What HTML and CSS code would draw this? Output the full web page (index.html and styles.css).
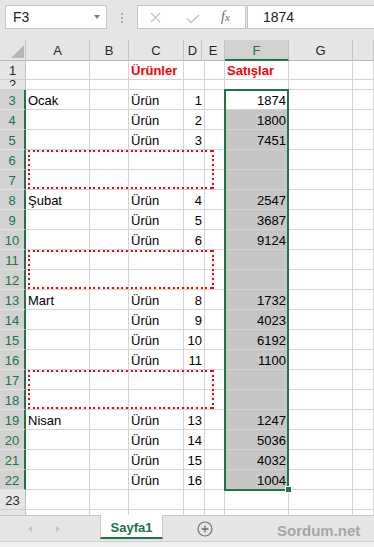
FILE: index.html
```html
<!DOCTYPE html>
<html lang="tr">
<head>
<meta charset="utf-8">
<title>Sayfa1</title>
<link rel="stylesheet" href="styles.css">
</head>
<body>
<div class="app">
  <div class="formula-bar">
    <div class="name-box"><span>F3</span><span class="caret"></span></div>
    <div class="grip"><i></i><i></i><i></i></div>
    <div class="fx-buttons">
      <svg class="ic-x" width="11" height="11" viewBox="0 0 11 11"><path d="M1 1 L10 10 M10 1 L1 10" stroke="#c4c4c4" stroke-width="1.3" fill="none"/></svg>
      <svg class="ic-ok" width="14" height="10" viewBox="0 0 14 10"><path d="M1 4.5 L5 8.5 L13 1" stroke="#c4c4c4" stroke-width="1.6" fill="none"/></svg>
      <span class="fx"><i>f</i><i class="sub">x</i></span>
    </div>
    <div class="formula-input">1874</div>
  </div>

  <div class="sheet">
    <div class="colhead">
      <div class="ch corner"><span class="tri"></span></div>
      <div class="ch">A</div>
      <div class="ch">B</div>
      <div class="ch">C</div>
      <div class="ch">D</div>
      <div class="ch">E</div>
      <div class="ch on">F</div>
      <div class="ch">G</div>
      <div class="ch"></div>
    </div>
    <table class="grid">
      <colgroup>
        <col class="c-rh"><col class="c-a"><col class="c-b"><col class="c-c"><col class="c-d"><col class="c-e"><col class="c-f"><col class="c-g"><col class="c-h">
      </colgroup>
      <tbody>
        <tr><th>1</th><td></td><td></td><td class="hd">Ürünler</td><td></td><td></td><td class="hd">Satışlar</td><td></td><td></td></tr>
        <tr class="r2"><th><span>2</span></th><td></td><td></td><td></td><td></td><td></td><td></td><td></td><td></td></tr>
        <tr><th class="sel">3</th><td>Ocak</td><td></td><td>Ürün</td><td class="n">1</td><td></td><td class="n">1874</td><td></td><td></td></tr>
        <tr><th class="sel">4</th><td></td><td></td><td>Ürün</td><td class="n">2</td><td></td><td class="n s">1800</td><td></td><td></td></tr>
        <tr><th class="sel">5</th><td></td><td></td><td>Ürün</td><td class="n">3</td><td></td><td class="n s">7451</td><td></td><td></td></tr>
        <tr><th class="sel">6</th><td></td><td></td><td></td><td></td><td></td><td class="s"></td><td></td><td></td></tr>
        <tr><th class="sel">7</th><td></td><td></td><td></td><td></td><td></td><td class="s"></td><td></td><td></td></tr>
        <tr><th class="sel">8</th><td>Şubat</td><td></td><td>Ürün</td><td class="n">4</td><td></td><td class="n s">2547</td><td></td><td></td></tr>
        <tr><th class="sel">9</th><td></td><td></td><td>Ürün</td><td class="n">5</td><td></td><td class="n s">3687</td><td></td><td></td></tr>
        <tr><th class="sel">10</th><td></td><td></td><td>Ürün</td><td class="n">6</td><td></td><td class="n s">9124</td><td></td><td></td></tr>
        <tr><th class="sel">11</th><td></td><td></td><td></td><td></td><td></td><td class="s"></td><td></td><td></td></tr>
        <tr><th class="sel">12</th><td></td><td></td><td></td><td></td><td></td><td class="s"></td><td></td><td></td></tr>
        <tr><th class="sel">13</th><td>Mart</td><td></td><td>Ürün</td><td class="n">8</td><td></td><td class="n s">1732</td><td></td><td></td></tr>
        <tr><th class="sel">14</th><td></td><td></td><td>Ürün</td><td class="n">9</td><td></td><td class="n s">4023</td><td></td><td></td></tr>
        <tr><th class="sel">15</th><td></td><td></td><td>Ürün</td><td class="n">10</td><td></td><td class="n s">6192</td><td></td><td></td></tr>
        <tr><th class="sel">16</th><td></td><td></td><td>Ürün</td><td class="n">11</td><td></td><td class="n s">1100</td><td></td><td></td></tr>
        <tr><th class="sel">17</th><td></td><td></td><td></td><td></td><td></td><td class="s"></td><td></td><td></td></tr>
        <tr><th class="sel">18</th><td></td><td></td><td></td><td></td><td></td><td class="s"></td><td></td><td></td></tr>
        <tr><th class="sel">19</th><td>Nisan</td><td></td><td>Ürün</td><td class="n">13</td><td></td><td class="n s">1247</td><td></td><td></td></tr>
        <tr><th class="sel">20</th><td></td><td></td><td>Ürün</td><td class="n">14</td><td></td><td class="n s">5036</td><td></td><td></td></tr>
        <tr><th class="sel">21</th><td></td><td></td><td>Ürün</td><td class="n">15</td><td></td><td class="n s">4032</td><td></td><td></td></tr>
        <tr><th class="sel">22</th><td></td><td></td><td>Ürün</td><td class="n">16</td><td></td><td class="n s">1004</td><td></td><td></td></tr>
        <tr><th>23</th><td></td><td></td><td></td><td></td><td></td><td></td><td></td><td></td></tr>
        <tr><th></th><td></td><td></td><td></td><td></td><td></td><td></td><td></td><td></td></tr>
      </tbody>
    </table>
    <div class="sel-outline"></div>
    <div class="fill-handle"></div>
    <div class="mark m1"></div>
    <div class="mark m2"></div>
    <div class="mark m3"></div>
  </div>

  <div class="tabbar">
    <div class="nav"><span class="arr l"></span><span class="arr r"></span></div>
    <div class="tab">Sayfa1</div>
    <svg class="add" width="16" height="16" viewBox="0 0 16 16"><circle cx="8" cy="8" r="7" stroke="#707070" stroke-width="1.2" fill="none"/><path d="M8 4.5 V11.5 M4.5 8 H11.5" stroke="#707070" stroke-width="1.3"/></svg>
    <div class="brand">Sordum.net</div>
  </div>
  <div class="statusbar"></div>
</div>
</body>
</html>
```

FILE: styles.css
```css
* { box-sizing: border-box; margin: 0; padding: 0; }
html, body { width: 374px; height: 547px; overflow: hidden; }
body { background: #e6e6e6; font-family: "Liberation Sans", Arial, sans-serif; color: #000; }

.app { display: flex; flex-direction: column; height: 547px; }

/* formula bar */
.formula-bar { flex: 0 0 40px; display: flex; align-items: flex-start; padding: 5px 0 0 5px; }
.name-box { flex: 0 0 102px; height: 24px; background: #fff; border: 1px solid #c6c6c6; display: flex; align-items: center; justify-content: space-between; padding: 0 6px 0 7px; font-size: 14px; line-height: 22px; color: #222; }
.caret { width: 0; height: 0; border-left: 3.5px solid transparent; border-right: 3.5px solid transparent; border-top: 4px solid #7b7b7b; margin-top: -1px; }
.grip { display: flex; flex-direction: column; gap: 2px; margin: 8px 0 0 14px; }
.grip i { display: block; width: 2px; height: 2px; background: #a9a9a9; }
.fx-buttons { flex: 0 0 109px; height: 24px; margin-left: 14px; background: #fff; border: 1px solid #c6c6c6; display: flex; align-items: center; }
.ic-x { margin-left: 12px; }
.ic-ok { margin: 3px 0 0 25px; }
.fx { margin-left: 21px; font-family: "Liberation Serif", serif; font-size: 14px; color: #6b6b6b; line-height: 22px; }
.fx i { font-style: italic; }
.fx .sub { font-size: 11px; }
.formula-input { flex: 1; height: 24px; margin-left: 1px; background: #fff; border: 1px solid #c6c6c6; border-right: 0; padding-left: 15px; font-size: 14px; line-height: 22px; color: #222; }

/* sheet */
.sheet { flex: 0 0 475px; position: relative; overflow: hidden; background: #fff; }
.colhead { display: grid; grid-template-columns: 26px 64px 39px 55px 18px 23px 64px 64px 1fr; height: 20px; background: #e6e6e6; }
.ch { border-right: 1px solid #c3c3c3; border-bottom: 1px solid #b8b8b8; text-align: center; font-size: 13px; line-height: 16px; padding-top: 3px; color: #262626; }
.ch.on { background: #d2d2d2; color: #217346; border-bottom: 2px solid #217346; }
.corner { display: flex; justify-content: flex-end; align-items: flex-end; padding: 0 1px 2px 0; }
.tri { width: 13px; height: 13px; background: #b6b6b6; clip-path: polygon(100% 0, 100% 100%, 0 100%); }

.grid { width: 374px; table-layout: fixed; border-collapse: separate; border-spacing: 0; font-size: 13px; }
.c-rh { width: 26px; } .c-a { width: 64px; } .c-b { width: 39px; } .c-c { width: 55px; }
.c-d { width: 21px; } .c-e { width: 20px; } .c-f { width: 64px; } .c-g { width: 64px; } .c-h { width: 21px; }
.grid td, .grid th { height: 20px; padding: 0 2px; border-right: 1px solid #d4d4d4; border-bottom: 1px solid #d4d4d4; line-height: 16px; vertical-align: bottom; white-space: nowrap; overflow: hidden; text-align: left; font-weight: normal; }
.grid th { background: #e6e6e6; text-align: center; color: #262626; border-right-color: #c3c3c3; border-bottom-color: #cfcfcf; padding: 0; }
.grid th.sel { background: #d2d2d2; color: #217346; border-right: 2px solid #217346; border-bottom-color: #e2e2e2; }
.grid .r2 td, .grid .r2 th { height: 10px; }
.grid .r2 th { vertical-align: top; }
.grid .r2 th span { display: block; height: 6px; overflow: hidden; line-height: 10px; }
.grid td.n { text-align: right; }
.grid td.s { background: #c6c6c6; }
.grid td.hd { color: #f00; font-weight: bold; }

.sel-outline { position: absolute; left: 224px; top: 49px; width: 65px; height: 402px; border: 2px solid #217346; }
.fill-handle { position: absolute; left: 285px; top: 446px; width: 7px; height: 7px; background: #217346; border: 1px solid #fff; }
.mark {
  position: absolute; left: 28px; width: 186px; height: 39px;
  background:
    repeating-linear-gradient(to right, #f00 0 2px, transparent 2px 5px, #f00 5px 7px, transparent 7px 9px, #f00 9px 11px, transparent 11px 14px) left top / 100% 2px no-repeat,
    repeating-linear-gradient(to right, #f00 0 2px, transparent 2px 5px, #f00 5px 7px, transparent 7px 9px, #f00 9px 11px, transparent 11px 14px) left bottom / 100% 2px no-repeat,
    repeating-linear-gradient(to bottom, #f00 0 2px, transparent 2px 5px, #f00 5px 7px, transparent 7px 9px, #f00 9px 11px, transparent 11px 14px) left top / 2px 100% no-repeat,
    repeating-linear-gradient(to bottom, #f00 0 2px, transparent 2px 5px, #f00 5px 7px, transparent 7px 9px, #f00 9px 11px, transparent 11px 14px) right top / 2px 100% no-repeat;
}
.m1 { top: 110px; } .m2 { top: 210px; } .m3 { top: 330px; }

/* sheet tabs */
.tabbar { flex: 0 0 26px; display: flex; align-items: flex-start; border-top: 1px solid #c6c6c6; background: #e6e6e6; }
.nav { width: 100px; height: 25px; display: flex; align-items: center; padding-left: 28px; gap: 24px; }
.arr { width: 0; height: 0; border-top: 3.5px solid transparent; border-bottom: 3.5px solid transparent; }
.arr.l { border-right: 4px solid #c3c3c3; }
.arr.r { border-left: 4px solid #c3c3c3; }
.tab { width: 63px; height: 24px; margin-top: -1px; background: #fff; border-left: 1px solid #c6c6c6; border-right: 1px solid #c6c6c6; border-bottom: 2px solid #217346; text-align: center; font-weight: bold; font-size: 13px; color: #217346; padding-top: 4px; line-height: 18px; }
.add { margin: 5px 0 0 34px; }
.brand { margin: 6px 0 0 64px; font-size: 15px; font-weight: bold; line-height: 17px; color: #a6a6a6; }
.statusbar { flex: 0 0 6px; border-top: 1px solid #d0d0d0; background: #f0f0f0; }
```
